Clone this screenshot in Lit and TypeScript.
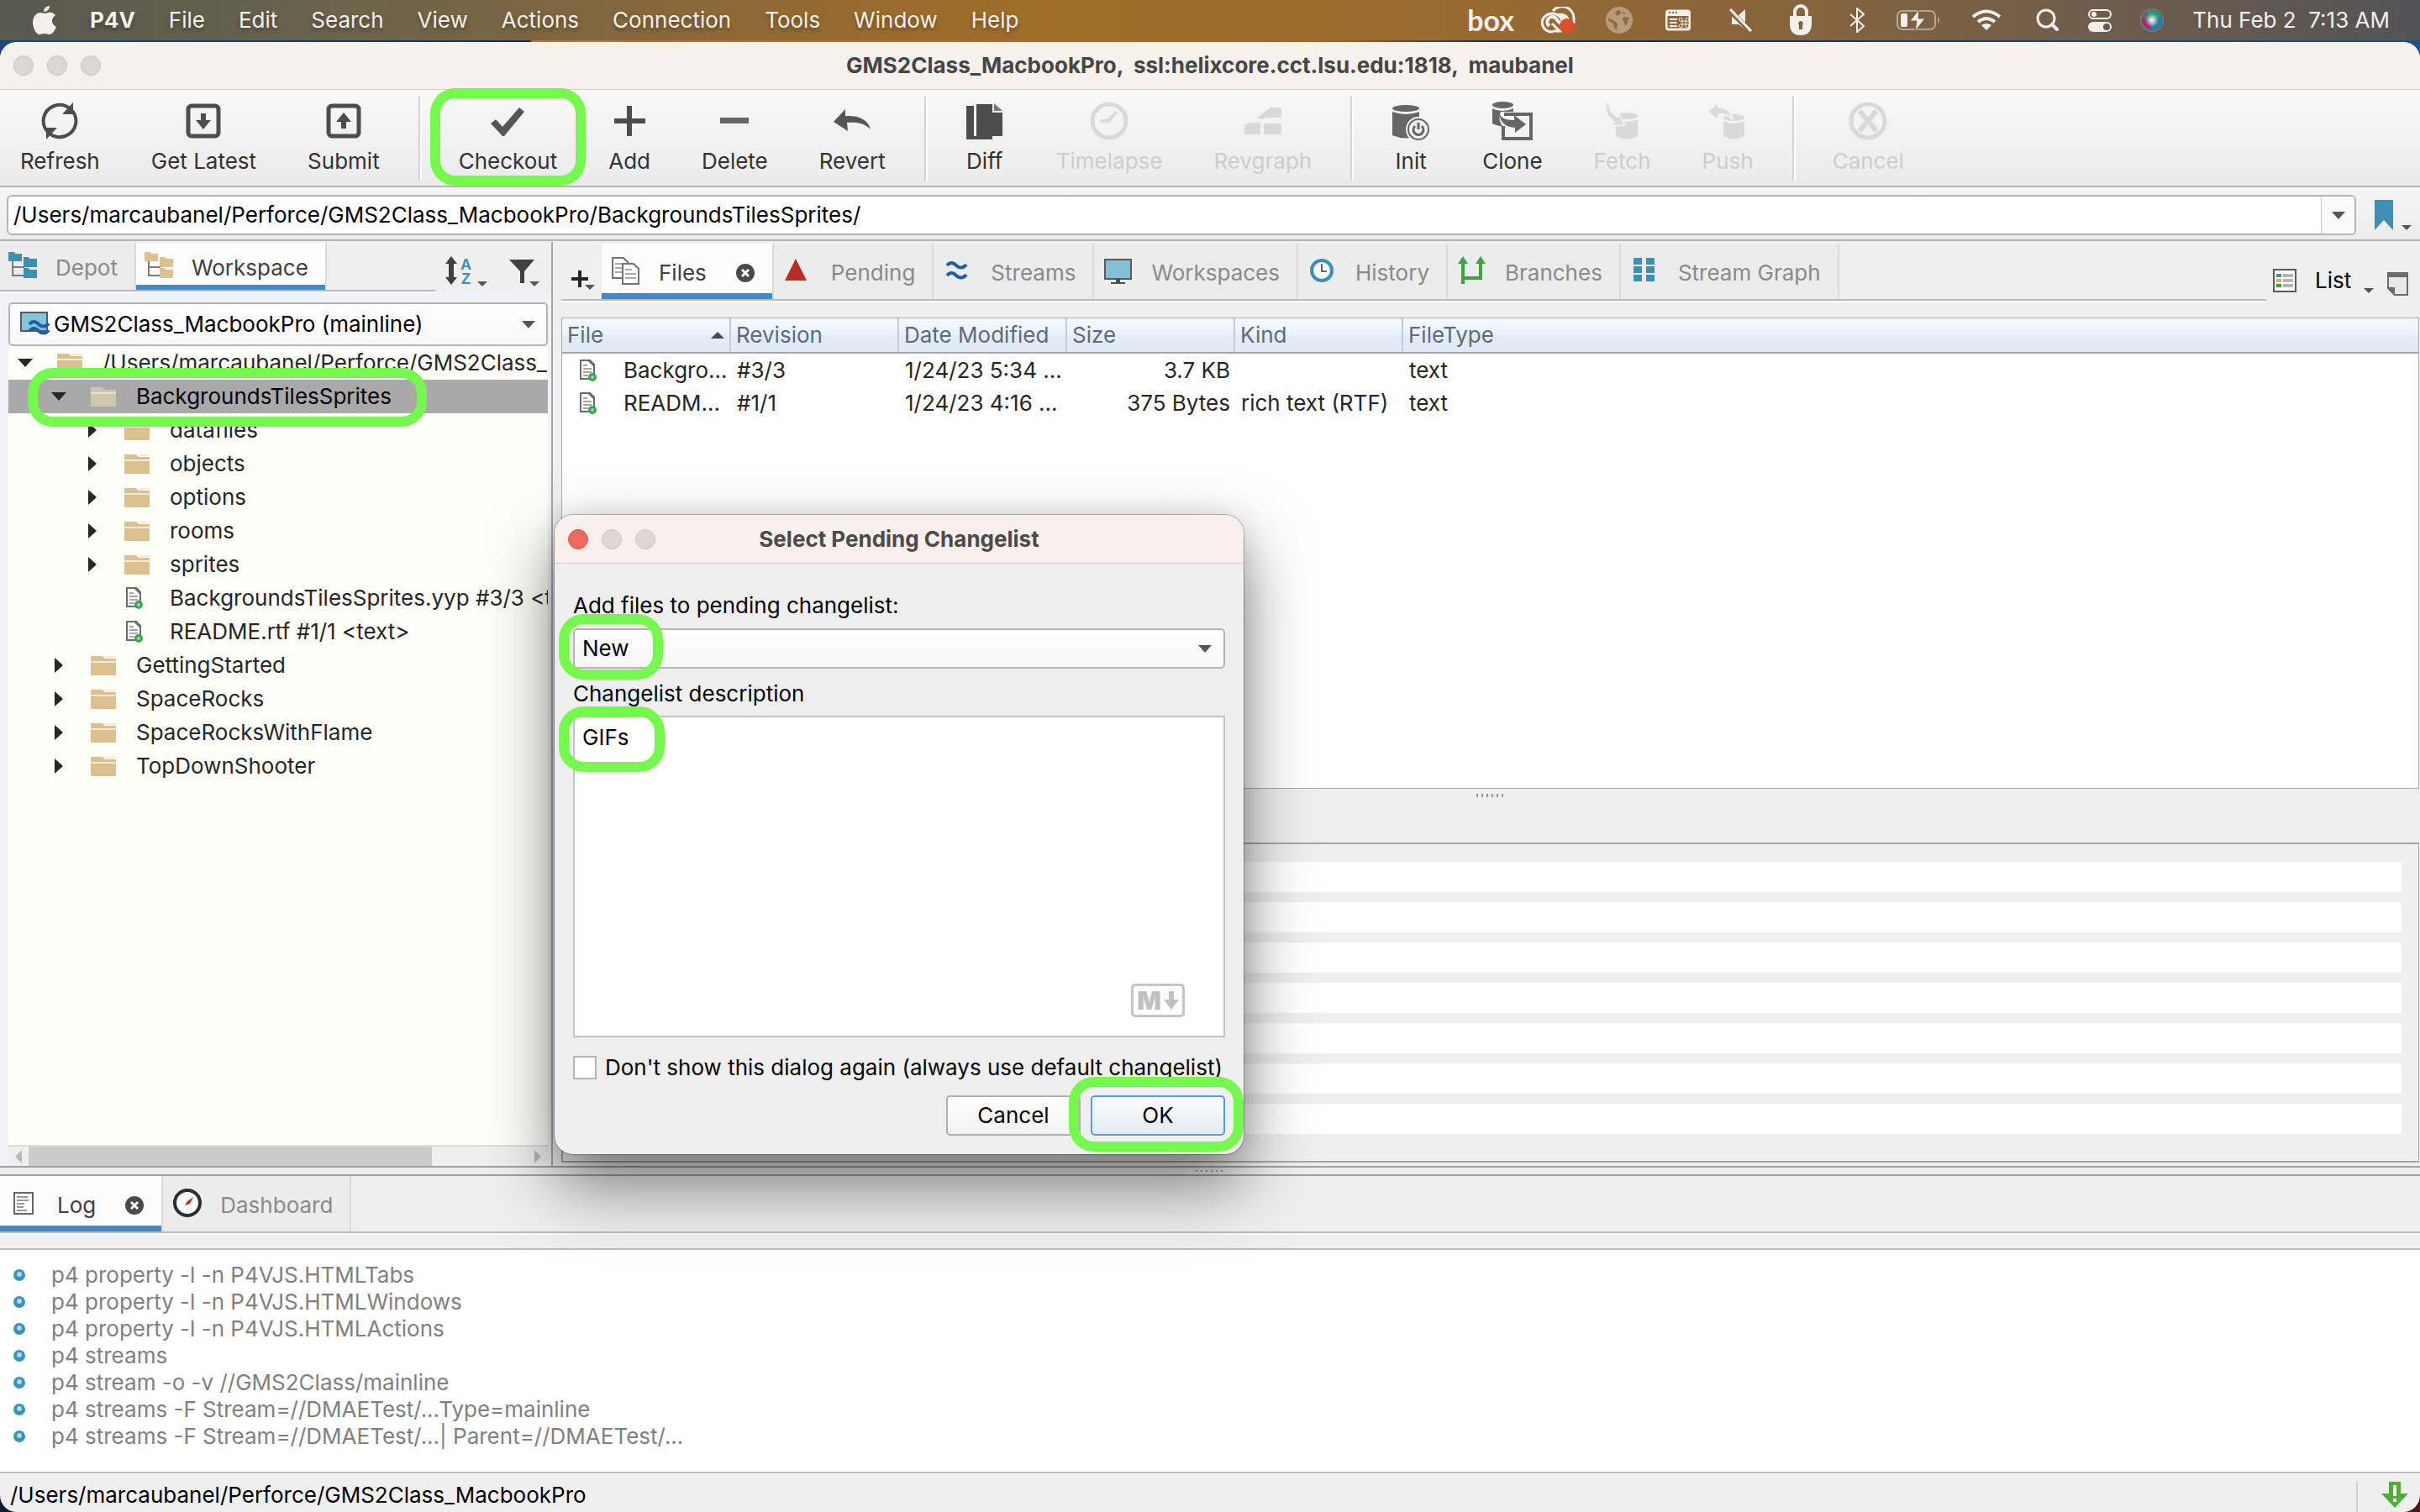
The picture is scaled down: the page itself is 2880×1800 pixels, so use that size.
import { LitElement, html, svg, css, nothing, TemplateResult } from "lit";
import { customElement } from "lit/decorators.js";
import { classMap } from "lit/directives/class-map.js";

const icon = (w: number, h: number, body: unknown) =>
  html`<svg class="ico" width=${w} height=${h} viewBox="0 0 ${w} ${h}" fill="none" aria-hidden="true">${body}</svg>`;

const G = "#4d4d4d";
const D = "#d9d9d9";

/* Toolbar icons, all on a 48 x 48 grid */
const drum = (x: number, y: number, w: number, h: number, c: string) => svg`
  <ellipse cx=${x + w / 2} cy=${y + 4} rx=${w / 2} ry="4" fill=${c}/>
  <path d="M${x} ${y + 8}q${w / 2} 6 ${w} 0v${h - 12}q${-w / 2} 7 ${-w} 0z" fill=${c}/>`;

const tool: Record<string, TemplateResult> = {
  refresh: icon(48, 48, svg`<g stroke=${G} stroke-width="4">
    <path d="M9 36A19 19 0 0 1 5 20A19.500 19.500 0 0 1 36 9"/><path d="M39 12A19 19 0 0 1 43 28A19.500 19.500 0 0 1 12 39"/></g>
    <path d="M40 2v14H27z" fill=${G}/><path d="M8 46V32h13z" fill=${G}/>`),
  latest: icon(48, 48, svg`<rect x="6" y="6" width="36" height="36" rx="4" stroke=${G} stroke-width="5"/><path d="M21 15h6v8h6l-9 11-9-11h6z" fill=${G}/>`),
  submit: icon(48, 48, svg`<rect x="6" y="6" width="36" height="36" rx="4" stroke=${G} stroke-width="5"/><path d="M21 33h6v-8h6l-9-11-9 11h6z" fill=${G}/>`),
  checkout: icon(48, 48, svg`<path d="M4 27l6-5 8 9L38 8l6 5-24 29h-2z" fill="#555"/>`),
  add: icon(48, 48, svg`<path d="M21 6h6v15h16v6H27v15h-6V27H6v-6h15z" fill=${G}/>`),
  remove: icon(48, 48, svg`<rect x="7" y="20" width="34" height="7" fill="#666"/>`),
  revert: icon(48, 48, svg`<path d="M16 10v8c16-1 27 5 30 16-7-7-16-9-28-8l1 10L2 25z" fill="#555"/>`),
  diff: icon(48, 48, svg`<path d="M2 6h9v36h22v4H2z" fill=${G}/><path d="M14 4h19v10h12v28H14z" fill=${G}/><path d="M35 3l10 9H35z" fill="#777"/>`),
  timelapse: icon(48, 48, svg`<circle cx="24" cy="24" r="20" stroke=${D} stroke-width="5"/><path d="M14 24h9L33 13" stroke=${D} stroke-width="4"/>`),
  revgraph: icon(48, 48, svg`<path d="M16 21L33 8h13v12H28l-4 2zM2 29q4-3 9-3h10v14H2zM25 27h21v13H25z" fill=${D}/>`),
  init: icon(48, 48, svg`${drum(2, 5, 32, 40, "#666")}<circle cx="33" cy="34" r="15" fill="#f2f2f2"/><circle cx="33" cy="34" r="12" stroke="#666" stroke-width="2"/><path d="M29 30a6 6 0 1 0 8 0M33 26v8" stroke="#666" stroke-width="3"/>`),
  clone: icon(48, 48, svg`${drum(0, 1, 25, 30, "#666")}<path d="M10 13h37v33H12V30q-6-8-2-17z" fill="#f2f2f2"/><path d="M14 16h32v29H13V30" stroke="#666" stroke-width="4"/><path d="M8 15q4 9 18 8v-6l14 11-13 10v-6Q10 31 8 15z" fill="#666"/>`),
  fetch: icon(48, 48, svg`${drum(16, 14, 26, 32, D)}<path d="M8 1q-2 12 10 18v-6l9 16-17 1 4-5Q1 17 5 1z" fill=${D} stroke="#f2f2f2" stroke-width="2"/>`),
  push: icon(48, 48, svg`${drum(19, 16, 25, 30, D)}<path d="M0 13L13 2v6q14 0 17 14-7-7-17-6v7z" fill=${D} stroke="#f2f2f2" stroke-width="2"/>`),
  cancel: icon(48, 48, svg`<circle cx="24" cy="24" r="20" stroke=${D} stroke-width="5"/><path d="M14 12l20 24M34 12L14 36" stroke=${D} stroke-width="6"/>`),
};

const treeIcon = (c: string) => icon(34, 34, svg`
  <path d="M5 10v19h14M5 19h14" stroke="#7a7a7a" stroke-width="2"/>
  <path d="M0 1h7l1 2h8v9H0zM18 7h6l1 2h9v10H18zM18 20h6l1 2h9v10H18z" fill=${c}/>`);

const page = (x: number, y: number) => svg`<path d="M${x} ${y}h13l6 6v18h-19z" fill="#fff" stroke="#737373" stroke-width="2"/>
  <path d="M${x + 3} ${y + 7}h8M${x + 3} ${y + 12}h13M${x + 3} ${y + 17}h13" stroke="#a8a8a8" stroke-width="2"/>`;

const wave = (y: number) => svg`<path d="M1 ${y + 1}c4-5 8-3 11 0s8 4 12-1" stroke="#1f5f9e" stroke-width="4"/>`;

const tabIcon: Record<string, TemplateResult> = {
  depot: treeIcon("#3d8fb4"),
  workspace: treeIcon("#dcc08f"),
  files: icon(34, 34, svg`${page(1, 2)}${page(13, 9)}`),
  pending: icon(34, 34, svg`<path d="M14 3l13 26H1z" fill="#bc2c26"/>`),
  streams: icon(34, 34, svg`<g transform="translate(3 4)">${wave(6)}${wave(18)}</g>`),
  workspaces: icon(34, 34, svg`<rect x="1" y="4" width="31" height="23" fill="#84bfd9" stroke="#5a5a5a" stroke-width="2"/><path d="M14 27h5v4h6v2H8v-2h6z" fill="#4d4d4d"/>`),
  history: icon(34, 34, svg`<circle cx="16" cy="17" r="12" stroke="#3d8fb4" stroke-width="4" fill="#fff"/><path d="M16 9v9h6" stroke="#666" stroke-width="2"/>`),
  branches: icon(34, 34, svg`<path d="M6 33V6M6 26h21V6" stroke="#43a047" stroke-width="4"/><path d="M6 0l6 9H0zM27 0l6 9H21z" fill="#43a047"/>`),
  graph: icon(34, 34, svg`<path d="M3 2h10v8H3zM18 2h10v8H18zM3 12h10v8H3zM18 12h10v8H18zM3 22h10v8H3zM18 22h10v8H18z" fill="#3d8fb4"/>`),
  log: icon(34, 34, svg`<rect x="5" y="5" width="22" height="25" fill="#fff" stroke="#666" stroke-width="2"/><path d="M8 10h13M8 14h14M8 18h9M8 22h8M8 26h12" stroke="#999" stroke-width="2"/>`),
  dashboard: icon(34, 34, svg`<circle cx="17" cy="17" r="15" stroke="#2e2e2e" stroke-width="4" fill="#fff"/><path d="M14 20l3-5 7-5-4 8z" fill="#c62828"/>`),
};

const closeGlyph = icon(24, 24, svg`<circle cx="12" cy="12" r="11" fill="#4a4a4a"/><path d="M8 8l8 8M16 8l-8 8" stroke="#fff" stroke-width="3"/>`);
const caret = icon(12, 6, svg`<path d="M0 0h12L6 6z" fill="#555"/>`);
const bigCaret = icon(16, 9, svg`<path d="M0 0h16L8 9z" fill="#555"/>`);
const folder = icon(30, 24, svg`<path d="M0 1h14l3 3h13v20H0z" fill="#dcc08f"/><path d="M17 2h13M0 8h30" stroke="#f3ead8" stroke-width="2"/>`);
const folderSel = icon(30, 24, svg`<path d="M0 1h14l3 3h13v20H0z" fill="#cfc6ae"/><path d="M0 8h30" stroke="#e6e3da" stroke-width="2"/>`);
const fileIcon = icon(30, 28, svg`<path d="M3 2h11l5 5v17H3z" fill="#fff" stroke="#6b6b6b" stroke-width="2"/><path d="M13 2l6 6" stroke="#6b6b6b" stroke-width="3"/><path d="M6 8h5M6 12h10M6 16h10M6 20h6" stroke="#a8a8a8" stroke-width="2"/><circle cx="17" cy="22" r="5" fill="#3fa354"/><circle cx="17" cy="22" r="2" fill="#9ad3a5"/>`);
const openArrow = icon(18, 18, svg`<path d="M0 4h18l-9 10z" fill="#262626"/>`);
const closedArrow = icon(18, 18, svg`<path d="M4 0l10 9-10 9z" fill="#262626"/>`);
const bullet = icon(16, 16, svg`<circle cx="8" cy="8" r="7" fill="#3d93b5"/><circle cx="8" cy="7" r="3" fill="#a9dbe9"/>`);

const W = "#f2efec";
const statusIcons: { cls: string; t: TemplateResult }[] = [
  { cls: "w76", t: icon(44, 32, svg`<path d="M14 5A14 14 0 0 1 39 14V20" stroke=${W} stroke-width="3"/><path d="M18 9q11-4 16 6l-6 4q-3-7-10-10z" fill=${W}/><path d="M14 30a12 11 0 1 1 11-13" stroke=${W} stroke-width="3"/><path d="M14 29h8l-9-9" stroke=${W} stroke-width="3"/><path d="M10 23a6 6 0 1 1 9-7l4 4" stroke=${W} stroke-width="4"/><circle cx="31" cy="23" r="9" fill="#dd4f26"/>`) },
  { cls: "w72", t: icon(32, 32, svg`<circle cx="16" cy="16" r="16" fill="#b79c7c"/><path d="M3 14l6 2 5 4-1 8-3-3-1-5-6-3zM14 4q5 0 4 4l-4 3-3-2zM22 12l6 1-2 6-2 4-3-6-2-2zM20 5l4 3-3 1z" fill="#8f6c41"/>`) },
  { cls: "w74", t: icon(30, 26, svg`<rect x="1" y="2" width="28" height="22" rx="3" stroke=${W} stroke-width="3"/><path d="M2 3h26v5H2z" fill=${W}/><path d="M4 4h2M8 4h2M12 4h2" stroke="#946835" stroke-width="2"/><path d="M5 12h9M5 16h9M5 20h9" stroke=${W} stroke-width="2"/><path d="M20 14h4v4h-4zM20 14h-1a2 2 0 1 1 1-2zM24 14v-2a2 2 0 1 1 1 2zM24 18h1a2 2 0 1 1-1 2zM20 18v2a2 2 0 1 1-1-2z" stroke=${W} stroke-width="1"/>`) },
  { cls: "w72", t: icon(28, 28, svg`<path d="M3 10h6l10-9v24l-8-6H3z" fill=${W}/><path d="M0 2l25 25" stroke="#8b6439" stroke-width="6"/><path d="M1 1l25 26" stroke=${W} stroke-width="3"/>`) },
  { cls: "w66", t: icon(28, 38, svg`<path d="M7 18V9a7 7 0 0 1 14 0v9" stroke=${W} stroke-width="4"/><path d="M1 14h26v11q-1 12-13 12T1 25z" fill=${W}/><path d="M14 20a3 3 0 0 1 2 5v5h-4v-5a3 3 0 0 1 2-5z" fill="#83613d"/>`) },
  { cls: "w58", t: icon(20, 30, svg`<path d="M2 8l16 14-8 7V1l8 7L2 22" stroke=${W} stroke-width="2"/>`) },
  { cls: "w96", t: icon(52, 26, svg`<rect x="1" y="2" width="45" height="22" rx="6" stroke="#b5a593" stroke-width="2"/><path d="M49 9q4 4 0 8z" fill="#b5a593"/><rect x="5" y="5" width="8" height="16" rx="2" fill=${W}/><path d="M27 0l-11 14h8l-2 12 12-15h-8z" fill=${W} stroke="#78603f" stroke-width="1"/>`) },
  { cls: "w76", t: icon(36, 26, svg`<path d="M2 9q16-13 32 0M8 15q10-8 20 0" stroke=${W} stroke-width="4"/><path d="M12 19q6-4 12 0l-6 6z" fill=${W}/>`) },
  { cls: "w64", t: icon(28, 28, svg`<circle cx="12" cy="12" r="10" stroke=${W} stroke-width="3"/><path d="M19 19l6 6" stroke=${W} stroke-width="4" stroke-linecap="round"/>`) },
  { cls: "w64", t: icon(28, 28, svg`<rect x="1" y="2" width="26" height="10" rx="5" stroke=${W} stroke-width="2"/><circle cx="7" cy="7" r="3" fill=${W}/><rect x="0" y="16" width="28" height="12" rx="6" fill=${W}/><circle cx="22" cy="22" r="4" fill="#6a5a4b"/>`) },
  { cls: "w64", t: icon(28, 28, svg`<defs><linearGradient id="siri" x1="0" y1="0" x2="1" y2="1"><stop offset="0" stop-color="#a83a5f"/><stop offset="0.4" stop-color="#3a7f78"/><stop offset="1" stop-color="#2a6fc0"/></linearGradient><radialGradient id="glow"><stop offset="0" stop-color="#fff"/><stop offset="1" stop-color="#fff" stop-opacity="0"/></radialGradient></defs><circle cx="14" cy="14" r="14" fill="#7d8088"/><circle cx="14" cy="14" r="13" fill="url(#siri)"/><path d="M1 12q2 11 13 14L9 14z" fill="#b8275c"/><path d="M8 3q12-3 17 8l-11 2z" fill="#2f9a74"/><circle cx="14" cy="14" r="8" fill="url(#glow)"/>`) },
];

const apple = icon(28, 34, svg`<path d="M14 9c3 0 4-2 8-1 2 0 4 2 5 3-6 4-5 11 1 14-2 5-5 9-8 9-2 0-3-1-6-1s-4 1-6 1C4 34 0 26 0 20 0 12 5 8 9 8c2 0 4 1 5 1zM13 7c0-4 3-7 7-7 0 4-3 7-7 7z" fill=${W}/>`);

const toolGroups = [
  [["refresh", "Refresh"], ["latest", "Get Latest"], ["submit", "Submit"]],
  [["checkout", "Checkout"], ["add", "Add"], ["remove", "Delete"], ["revert", "Revert"]],
  [["diff", "Diff"], ["timelapse", "Timelapse"], ["revgraph", "Revgraph"]],
  [["init", "Init"], ["clone", "Clone"], ["fetch", "Fetch"], ["push", "Push"]],
  [["cancel", "Cancel"]],
];
const disabledTools = new Set(["timelapse", "revgraph", "fetch", "push", "cancel"]);

type Node = { level: number; kind: "open" | "closed" | "file"; name: string; selected?: boolean };
const nodes: Node[] = [
  { level: 0, kind: "open", name: "/Users/marcaubanel/Perforce/GMS2Class_MacbookPro" },
  { level: 1, kind: "open", name: "BackgroundsTilesSprites", selected: true },
  { level: 2, kind: "closed", name: "datafiles" },
  { level: 2, kind: "closed", name: "objects" },
  { level: 2, kind: "closed", name: "options" },
  { level: 2, kind: "closed", name: "rooms" },
  { level: 2, kind: "closed", name: "sprites" },
  { level: 2, kind: "file", name: "BackgroundsTilesSprites.yyp #3/3 <text>" },
  { level: 2, kind: "file", name: "README.rtf #1/1 <text>" },
  { level: 1, kind: "closed", name: "GettingStarted" },
  { level: 1, kind: "closed", name: "SpaceRocks" },
  { level: 1, kind: "closed", name: "SpaceRocksWithFlame" },
  { level: 1, kind: "closed", name: "TopDownShooter" },
];

const viewTabs = [
  ["files", "Files"], ["pending", "Pending"], ["streams", "Streams"], ["workspaces", "Workspaces"],
  ["history", "History"], ["branches", "Branches"], ["graph", "Stream Graph"],
];

const rows = [
  ["Backgro...", "#3/3", "1/24/23 5:34 ...", "3.7 KB", "", "text"],
  ["READM...", "#1/1", "1/24/23 4:16 ...", "375 Bytes", "rich text (RTF)", "text"],
];

const logLines = [
  "p4 property -l -n P4VJS.HTMLTabs",
  "p4 property -l -n P4VJS.HTMLWindows",
  "p4 property -l -n P4VJS.HTMLActions",
  "p4 streams",
  "p4 stream -o -v //GMS2Class/mainline",
  "p4 streams -F Stream=//DMAETest/...Type=mainline",
  "p4 streams -F Stream=//DMAETest/...| Parent=//DMAETest/...",
];

const base = css`
  * { box-sizing: border-box; }
  svg { display: block; flex: none; }
  button, input, select, textarea { font: inherit; color: inherit; margin: 0; padding: 0; border: 0; background: none; border-radius: 0; outline: 0; }
  .ring { position: absolute; border: 12px solid #75f94c; border-radius: 30px; pointer-events: none; z-index: 2; }
`;

@customElement("mac-menubar")
class MacMenubar extends LitElement {
  static styles = [base, css`
    :host { display: flex; align-items: center; height: 48px; padding: 0 36px 0 39px; color: #f2efec;
      background: linear-gradient(90deg, #57594f 0%, #6b634b 14%, #80663f 24%, #996b2e 36%, #a06e2a 43%, #9c6c2e 57%, #88643b 73%, #6d5c4d 88%, #525356 100%); }
    nav { display: flex; align-items: center; gap: 40px; flex: 1; text-shadow: 0 3px 5px rgba(0, 0, 0, 0.35); }
    a { color: inherit; text-decoration: none; }
    .app { font-weight: 700; }
    .extras { display: flex; align-items: center; }
    .brand { font-family: Lato, sans-serif; font-weight: 700; font-size: 34px; line-height: 40px; width: 88px; }
    .cell { display: flex; align-items: center; }
    .w58 { width: 57px; } .w64 { width: 62px; } .w66 { width: 71px; }
    .w72 { width: 71px; } .w74 { width: 76px; } .w76 { width: 77px; } .w96 { width: 89px; }
    .clock { white-space: pre; }
  `];
  render() {
    return html`
      <nav aria-label="Menu bar">
        ${apple}
        ${["P4V", "File", "Edit", "Search", "View", "Actions", "Connection", "Tools", "Window", "Help"].map(
          (m, i) => html`<a href="#" class=${i === 0 ? "app" : ""}>${m}</a>`)}
      </nav>
      <div class="extras">
        <span class="brand">box</span>
        ${statusIcons.map((s) => html`<span class="cell ${s.cls}">${s.t}</span>`)}
        <span class="clock">Thu Feb 2  7:13 AM</span>
      </div>`;
  }
}

@customElement("tool-bar")
class ToolBar extends LitElement {
  static styles = [base, css`
    :host { display: flex; height: 116px; padding: 8px 0 6px; border-bottom: 2px solid #b4b4b4;
      background: linear-gradient(#f8f8f8, #ebebeb); }
    .group { display: flex; gap: 61px; padding: 0 46px; border-right: 2px solid #d4d4d4; box-shadow: 2px 0 0 #fff; }
    .group:first-child { padding-left: 24px; }
    .group:last-child { border: 0; box-shadow: none; }
    button { position: relative; display: flex; flex-direction: column; align-items: center; justify-content: flex-start; padding-top: 5px; gap: 8px; color: #333; line-height: 32px; }
    button:disabled { color: #cdcdcd; }
    .ring { inset: -10px -34px -6px; }
  `];
  render() {
    return html`${toolGroups.map((g) => html`<div class="group">${g.map(([k, label]) => html`
      <button type="button" ?disabled=${disabledTools.has(k)}>${tool[k]}<span>${label}</span>
        ${k === "checkout" ? html`<span class="ring"></span>` : nothing}</button>`)}</div>`)}`;
  }
}

const tabStyles = css`
  .tabs { display: flex; height: 68px; border-bottom: 2px solid #bababa; box-shadow: 0 2px 0 #fafafa; }
  .tab { display: flex; align-items: center; gap: 22px; padding: 4px 20px 0 12px; background: #ececec; color: #8a8a8a; border-right: 2px solid #dadada; line-height: 32px; white-space: nowrap; }
  .tab .ico { margin-bottom: 6px; }
  .tab.on { background: #fdfdfd; color: #404040; box-shadow: inset 0 -7px 0 #3b8bd0; }
  .close { display: flex; margin-left: 12px; }
  .close .ico { margin: 0; }
`;

@customElement("workspace-tree")
class WorkspaceTree extends LitElement {
  static styles = [base, tabStyles, css`
    :host { display: flex; flex-direction: column; min-height: 0; min-width: 0; background: #eff2f8; }
    .top { display: flex; align-items: flex-start; background: #efefef; padding-top: 2px; }
    .tabs { height: 58px; flex: 0 0 518px; }
    .tab { padding-left: 10px; }
    .tab.on { box-shadow: inset 0 -6px 0 #3b8bd0; }
    .tools { display: flex; flex: 1; padding: 14px 10px 0 12px; }
    .tools button { display: flex; align-items: flex-end; height: 38px; }
    .sort { width: 76px; gap: 6px; }
    .filter .ico + .ico { margin-left: -6px; }
    .inner { display: flex; flex-direction: column; flex: 1; min-height: 0; margin: 13px 4px 0 10px; }
    .combo { display: grid; align-items: center; height: 52px; border: 2px solid #b5b5b5; border-radius: 5px; background: linear-gradient(#fff, #f7f7f7); color: #000; }
    .combo > * { grid-area: 1 / 1; }
    .combo select { appearance: none; width: 100%; height: 48px; padding-left: 52px; }
    .combo .lead { margin-left: 12px; pointer-events: none; }
    .combo .end { justify-self: end; margin-right: 13px; pointer-events: none; }
    ul { list-style: none; margin: 0; padding: 0; flex: 1; background: #fffffa; overflow: hidden; border-bottom: 2px solid #dcdcdc; color: #262626; }
    li { position: relative; display: flex; align-items: center; height: 40px; white-space: nowrap; line-height: 32px; padding-left: 11px; }
    .l1 { padding-left: 51px; }
    .l2 { padding-left: 91px; }
    li.sel { background: #a9a9a9; color: #000; }
    .twist { width: 47px; flex: none; }
    .kind { width: 54px; flex: none; display: flex; height: 28px; align-items: center; }
    .ring { inset: -14px 144px -16px 23px; }
    .scroll { display: flex; align-items: center; height: 23px; background: #efefef; padding: 0 8px; gap: 8px; }
    .thumb { height: 23px; background: #cbcbcb; width: 480px; }
    .space { flex: 1; }
  `];
  render() {
    return html`
      <div class="top">
        <div class="tabs" role="tablist">
          <button class="tab" role="tab">${tabIcon.depot}<span>Depot</span></button>
          <button class="tab on" role="tab" aria-selected="true">${tabIcon.workspace}<span>Workspace</span></button>
        </div>
        <div class="tools">
          <button class="sort" aria-label="Sort">
            ${icon(32, 36, svg`<path d="M7 0l7 9h-4v16h4l-7 9-7-9h4V9H0z" fill="#404040"/><g font-family="Liberation Sans" font-weight="700" font-size="18" fill="#3d8fb4"><text x="18" y="16">A</text><text x="19" y="33">Z</text></g>`)}${caret}
          </button>
          <button class="filter" aria-label="Filter">
            ${icon(30, 36, svg`<path d="M0 4h30L18 18v14h-5V18z" fill="#404040"/>`)}${caret}
          </button>
        </div>
      </div>
      <div class="inner">
        <div class="combo">
          <select aria-label="Workspace"><option>GMS2Class_MacbookPro (mainline)</option></select>
          <span class="lead">${icon(36, 34, svg`<rect x="1" y="3" width="31" height="22" fill="#84c4dc" stroke="#5a5a5a" stroke-width="2"/><g transform="translate(10 10)">${wave(6)}${wave(14)}</g>`)}</span>
          <span class="end">${bigCaret}</span>
        </div>
        <ul role="tree">${nodes.map((n) => html`
          <li role="treeitem" class=${classMap({ ["l" + n.level]: true, sel: !!n.selected })}>
            <span class="twist">${n.kind === "open" ? openArrow : n.kind === "closed" ? closedArrow : nothing}</span>
            <span class="kind">${n.kind === "file" ? fileIcon : n.selected ? folderSel : folder}</span>
            <span>${n.name}</span>
            ${n.selected ? html`<span class="ring"></span>` : nothing}
          </li>`)}</ul>
        <div class="scroll">
          ${icon(8, 16, svg`<path d="M8 0v16L0 8z" fill="#b8b8b8"/>`)}
          <div class="thumb"></div><div class="space"></div>
          ${icon(8, 16, svg`<path d="M0 0v16l8-8z" fill="#b8b8b8"/>`)}
        </div>
      </div>`;
  }
}

@customElement("files-view")
class FilesView extends LitElement {
  static styles = [base, tabStyles, css`
    :host { display: flex; flex-direction: column; min-height: 0; min-width: 0; padding: 2px 1px 4px 10px; }
    .bar { display: flex; }
    .tabs { flex: 1; }
    .plus { display: flex; align-items: flex-end; width: 48px; padding: 0 0 11px 12px; }
    .plus .ico + .ico { margin-left: -4px; }
    .views { display: flex; align-items: flex-end; width: 182px; padding: 0 0 6px 8px; }
    .mode { display: flex; align-items: center; gap: 22px; color: #000; line-height: 32px; height: 36px; }
    .mode + .ico { margin: 0 16px 3px 15px; }
    .grid { flex: 1; margin-top: 20px; border: 1px solid #ababab; background: #fff; }
    table { width: 100%; table-layout: fixed; border-collapse: collapse; text-align: left; }
    th { font-weight: 400; color: #5b6b7b; height: 41px; padding: 0 6px; border-right: 2px solid #c4ccd4; border-bottom: 2px solid #9fa8af;
      background: linear-gradient(#f4faff, #e9f2fc 50%, #e4edf6 51%, #e1e9f2); line-height: 32px; }
    th:last-child { border-right: 0; }
    th .h { display: flex; justify-content: space-between; align-items: center; }
    td { height: 40px; padding: 0 8px; color: #262626; line-height: 32px; white-space: nowrap; }
    .num { text-align: right; padding-right: 5px; }
    .name { display: flex; align-items: center; gap: 24px; padding-left: 11px; }
    .c { width: 200px; }
    .grip { height: 64px; padding-top: 6px; display: flex; justify-content: center; }
    .details { border: 2px solid #a6a6a6; border-right-width: 1px; padding: 21px 20px 32px; display: flex; flex-direction: column; gap: 12px; background: #efefef; }
    .field { height: 36px; background: #fff; }
  `];
  render() {
    return html`
      <div class="bar">
        <div class="tabs" role="tablist">
          <button class="plus" aria-label="New tab">${icon(20, 26, svg`<path d="M8 3h4v8h8v4h-8v8H8v-8H0v-4h8z" fill="#262626"/>`)}${caret}</button>
          ${viewTabs.map(([k, label], i) => html`
            <div class=${classMap({ tab: true, on: i === 0 })} role="tab">${tabIcon[k]}<span>${label}</span>
              ${i === 0 ? html`<button class="close" aria-label="Close tab">${closeGlyph}</button>` : nothing}</div>`)}
        </div>
        <div class="views">
          <button class="mode">${icon(28, 28, svg`<rect x="1" y="1" width="26" height="26" fill="#fff" stroke="#5a5a5a" stroke-width="2"/><path d="M4 6h6v4H4z" fill="#3d8fb4"/><path d="M4 12h6v4H4z" fill="#e3b341"/><path d="M4 18h6v4H4z" fill="#43a02c"/><path d="M12 8h12M12 14h12M12 20h12" stroke="#b5b5b5" stroke-width="4"/>`)}<span>List</span></button>
          ${caret}
          ${icon(25, 28, svg`<path d="M1 1h23v26H9l-8-8z" fill="#e8e8e8" stroke="#6b6b6b" stroke-width="2"/><path d="M0 0h25v6H0zM0 18h9v10z" fill="#6b6b6b"/>`)}
        </div>
      </div>
      <div class="grid">
        <table>
          <colgroup><col class="c" /><col class="c" /><col class="c" /><col class="c" /><col class="c" /><col /></colgroup>
          <thead><tr>
            <th><span class="h">File ${icon(16, 8, svg`<path d="M0 8h16L8 0z" fill="#4a4a4a"/>`)}</span></th>
            ${["Revision", "Date Modified", "Size", "Kind", "FileType"].map((h) => html`<th>${h}</th>`)}
          </tr></thead>
          <tbody>${rows.map((r) => html`<tr>${r.map((c, i) => html`
            <td class=${i === 3 ? "num" : ""}>${i === 0 ? html`<span class="name">${fileIcon}<span>${c}</span></span>` : c}</td>`)}</tr>`)}</tbody>
        </table>
      </div>
      <div class="grip">${icon(34, 4, svg`<path d="M0 2h34" stroke="#999" stroke-width="4" stroke-dasharray="2 4"/>`)}</div>
      <div class="details">${[1, 2, 3, 4, 5, 6, 7].map(() => html`<div class="field"></div>`)}</div>`;
  }
}

@customElement("log-pane")
class LogPane extends LitElement {
  static styles = [base, tabStyles, css`
    :host { display: block; border-top: 2px solid #a0a0a0; }
    .gap { height: 18px; }
    .log { border-top: 2px solid #bdbdbd; border-bottom: 2px solid #bdbdbd; background: #fff; padding: 14px 0 26px; }
    ul { list-style: none; margin: 0; padding: 0 15px; color: #808080; }
    li { display: flex; align-items: center; gap: 30px; height: 32px; }
  `];
  render() {
    return html`
      <div class="tabs" role="tablist">
        <div class="tab on" role="tab">${tabIcon.log}<span>Log</span><button class="close" aria-label="Close tab">${closeGlyph}</button></div>
        <div class="tab" role="tab">${tabIcon.dashboard}<span>Dashboard</span></div>
      </div>
      <div class="gap"></div>
      <div class="log"><ul>${logLines.map((l) => html`<li>${bullet}<span>${l}</span></li>`)}</ul></div>`;
  }
}

@customElement("changelist-dialog")
class ChangelistDialog extends LitElement {
  static styles = [base, css`
    :host { position: absolute; left: 660px; top: 613px; width: 820px; border-radius: 22px; background: #efefef; color: #000; line-height: 32px;
      box-shadow: 0 0 0 1px rgba(0, 0, 0, 0.25), 0 36px 80px rgba(0, 0, 0, 0.5), 0 0 30px rgba(0, 0, 0, 0.1); }
    header { display: grid; grid-template-columns: 120px 1fr 120px; align-items: center; height: 58px; background: #f9efed; border-bottom: 1px solid #d5cfcd; border-radius: 22px 22px 0 0; }
    .dots { display: flex; gap: 16px; padding-left: 16px; }
    .dots i { width: 24px; height: 24px; border-radius: 50%; background: #e0d6d5; border: 1px solid #cfc5c4; }
    .dots .red { background: #ee6a5f; border-color: #d95a50; }
    h2 { margin: 0; font-size: 26px; font-weight: 700; text-align: center; color: #4a4a4a; }
    form { display: flex; flex-direction: column; padding: 34px 22px 22px; }
    .combo { position: relative; display: grid; align-items: center; height: 48px; margin: 11px 0 14px; border: 2px solid #b5b5b5; border-radius: 5px; background: linear-gradient(#fff, #f7f7f7); }
    .combo > * { grid-area: 1 / 1; }
    .combo select { appearance: none; width: 100%; height: 44px; padding-left: 9px; }
    .end { justify-self: end; margin-right: 14px; pointer-events: none; }
    .combo .ring { inset: -19px auto -15px -19px; width: 124px; }
    .area { position: relative; display: flex; margin: 10px 0 20px; border: 2px solid #c4c4c4; background: #fff; }
    textarea { flex: 1; height: 379px; resize: none; padding: 8px 9px; line-height: 32px; }
    .area .ring { left: -19px; top: -13px; width: 126px; height: 78px; }
    .md { position: absolute; right: 46px; bottom: 22px; display: flex; align-items: center; justify-content: center; gap: 3px; width: 64px; height: 40px; border: 3px solid #c4c4c4; border-radius: 5px; color: #c0c0c0; font-weight: 900; font-size: 30px; }
    .check { display: flex; align-items: center; gap: 10px; white-space: nowrap; }
    .check input { appearance: none; width: 28px; height: 28px; flex: none; border: 2px solid #b5b5b5; background: #fff; }
    .actions { display: flex; justify-content: flex-end; gap: 12px; margin-top: 17px; }
    .wrap { position: relative; }
    .actions button { width: 160px; height: 48px; border: 2px solid #b0b0b0; border-radius: 5px; background: linear-gradient(#fefefe, #f3f3f3); display: block; }
    .actions .ok { border-color: #5b9bdc; background: linear-gradient(#fbfcfe, #e4eaf2); }
    .actions .ring { inset: -22px -22px -19px -26px; }
  `];
  render() {
    return html`
      <header><div class="dots"><i class="red"></i><i></i><i></i></div><h2>Select Pending Changelist</h2></header>
      <form>
        <label for="list">Add files to pending changelist:</label>
        <div class="combo"><select id="list"><option>New</option></select><span class="end">${bigCaret}</span><span class="ring"></span></div>
        <label for="desc">Changelist description</label>
        <div class="area"><textarea id="desc" .value=${"GIFs"}></textarea>
          <span class="md"><span>M</span>${icon(18, 24, svg`<path d="M6 1h6v10h6l-9 12L0 11h6z" fill="#c0c0c0"/>`)}</span>
          <span class="ring"></span></div>
        <label class="check"><input type="checkbox" />Don't show this dialog again (always use default changelist)</label>
        <div class="actions">
          <button type="button">Cancel</button>
          <div class="wrap"><button type="button" class="ok">OK</button><span class="ring"></span></div>
        </div>
      </form>`;
  }
}

@customElement("app-root")
class AppRoot extends LitElement {
  static styles = [base, css`
    :host { display: flex; flex-direction: column; height: 100vh; overflow: hidden; position: relative; font-family: Inter, "Liberation Sans", sans-serif; font-size: 26px; line-height: 32px;
      background: linear-gradient(90deg, #1d4878 0%, #16305a 21.9%, #b5792c 22%, #a8641f 55%, #1b2c4a 62%, #244f80 100%) top / 100% 80px no-repeat, linear-gradient(90deg, #101c30 50%, #4a1616 50%); }
    .window { flex: 1; display: flex; flex-direction: column; min-height: 0; margin-top: 2px; background: #efefef; border-radius: 20px; overflow: hidden; }
    .title { display: grid; grid-template-columns: 200px 1fr 200px; align-items: center; height: 57px; background: #f7f1ec; border-bottom: 1px solid #d2d0ce; }
    .dots { display: flex; gap: 16px; padding-left: 16px; }
    .dots i { width: 24px; height: 24px; border-radius: 50%; background: #dcd7d3; border: 1px solid #c6c1bd; }
    h1 { margin: 0; font-size: 26px; line-height: 32px; font-weight: 700; text-align: center; color: #464646; white-space: pre; }
    .address { display: flex; align-items: center; height: 64px; padding: 9px 10px 5px 8px; border-bottom: 2px solid #b4b4b4; background: linear-gradient(#f6f6f6, #ececec); }
    .field { display: flex; flex: 1; height: 48px; border: 2px solid #b4b4b4; border-radius: 6px; background: #fff; overflow: hidden; }
    .field input { flex: 1; min-width: 0; padding-left: 6px; color: #000; }
    .field button { width: 40px; border-left: 1px solid #c8c8c8; display: flex; align-items: center; justify-content: center; background: #fafafa; }
    .mark { display: flex; align-items: flex-end; gap: 10px; margin-left: 22px; }
    .main { flex: 1; display: flex; min-height: 0; border-bottom: 2px solid #a0a0a0; }
    workspace-tree { flex: 0 0 656px; }
    files-view { flex: 1; border-left: 2px solid #a6a6a6; margin-top: 1px; }
    .grip { height: 8px; display: flex; justify-content: center; align-items: center; }
    footer { display: flex; align-items: stretch; height: 46px; color: #000; border-top: 1px solid #fff; }
    footer p { margin: 0; flex: 1; padding: 9px 12px; }
    .sync { display: flex; align-items: flex-start; border-left: 2px solid #cfcfcf; margin-top: 9px; padding: 0 14px 0 28px; }
  `];
  render() {
    return html`
      <mac-menubar></mac-menubar>
      <div class="window">
        <div class="title"><div class="dots"><i></i><i></i><i></i></div><h1>GMS2Class_MacbookPro,  ssl:helixcore.cct.lsu.edu:1818,  maubanel</h1></div>
        <tool-bar></tool-bar>
        <div class="address">
          <div class="field"><input aria-label="Path" .value=${"/Users/marcaubanel/Perforce/GMS2Class_MacbookPro/BackgroundsTilesSprites/"} /><button aria-label="Recent paths">${bigCaret}</button></div>
          <button class="mark" aria-label="Bookmarks">${icon(22, 36, svg`<path d="M0 0h22v36L11 24 0 36z" fill="#3d8fb4"/>`)}${caret}</button>
        </div>
        <div class="main"><workspace-tree></workspace-tree><files-view></files-view></div>
        <div class="grip">${icon(34, 2, svg`<path d="M0 1h34" stroke="#999" stroke-width="2" stroke-dasharray="2 4"/>`)}</div>
        <log-pane></log-pane>
        <footer><p>/Users/marcaubanel/Perforce/GMS2Class_MacbookPro</p>
          <span class="sync">${icon(32, 32, svg`<path d="M9 0h14v14h9L16 31 0 14h9z" fill="#4caf38"/><path d="M16 4v13M16 20v4" stroke="#fff" stroke-width="4"/>`)}</span></footer>
      </div>
      <changelist-dialog></changelist-dialog>`;
  }
}
